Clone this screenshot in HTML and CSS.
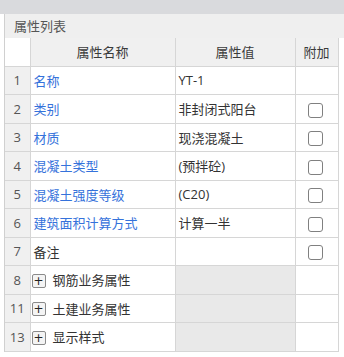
FILE: index.html
```html
<!DOCTYPE html>
<html lang="zh">
<head>
<meta charset="utf-8">
<title>属性列表</title>
<link rel="stylesheet" href="styles.css">
</head>
<body>
<div class="topbar"></div>
<div class="panel">
  <div class="title">属性列表</div>
  <table class="grid">
    <colgroup>
      <col class="c-num"><col class="c-name"><col class="c-val"><col class="c-add">
    </colgroup>
    <thead>
      <tr>
        <th class="num-head"></th>
        <th>属性名称</th>
        <th>属性值</th>
        <th>附加</th>
      </tr>
    </thead>
    <tbody>
      <tr><td class="num">1</td><td class="name link">名称</td><td class="val">YT-1</td><td class="add"></td></tr>
      <tr><td class="num">2</td><td class="name link">类别</td><td class="val">非封闭式阳台</td><td class="add"><span class="cb"></span></td></tr>
      <tr><td class="num">3</td><td class="name link">材质</td><td class="val">现浇混凝土</td><td class="add"><span class="cb"></span></td></tr>
      <tr><td class="num">4</td><td class="name link">混凝土类型</td><td class="val">(预拌砼)</td><td class="add"><span class="cb"></span></td></tr>
      <tr><td class="num">5</td><td class="name link">混凝土强度等级</td><td class="val">(C20)</td><td class="add"><span class="cb"></span></td></tr>
      <tr><td class="num">6</td><td class="name link">建筑面积计算方式</td><td class="val">计算一半</td><td class="add"><span class="cb"></span></td></tr>
      <tr><td class="num">7</td><td class="name">备注</td><td class="val"></td><td class="add"><span class="cb"></span></td></tr>
      <tr><td class="num">8</td><td class="name group"><span class="plus">+</span>钢筋业务属性</td><td class="val dis"></td><td class="add"></td></tr>
      <tr><td class="num">11</td><td class="name group"><span class="plus">+</span>土建业务属性</td><td class="val dis"></td><td class="add"></td></tr>
      <tr><td class="num">13</td><td class="name group"><span class="plus">+</span>显示样式</td><td class="val dis"></td><td class="add"></td></tr>
    </tbody>
  </table>
</div>
</body>
</html>
```

FILE: styles.css
```css
html, body {
  margin: 0;
  padding: 0;
  background: #ffffff;
}
body {
  font-family: "Open Sans", "Noto Sans CJK SC", sans-serif;
  font-size: 13px;
  color: #333333;
  width: 344px;
  height: 357px;
  overflow: hidden;
}
.topbar {
  height: 14px;
  background: #d9dadd;
}
.panel {
  margin-left: 4px;
  border-left: 1px solid #d0d0d0;
  background: #ffffff;
}
.title {
  height: 24px;
  line-height: 24px;
  padding-left: 9px;
  color: #555555;
  background: #efefef;
  font-family: "Noto Sans CJK SC", sans-serif;
}
.grid {
  border-collapse: collapse;
  table-layout: fixed;
  width: 333px;
  background: #ffffff;
}
.c-num { width: 25px; }
.c-name { width: 145px; }
.c-val { width: 120px; }
.c-add { width: 43px; }
.grid th, .grid td {
  border: 1px solid #d6d6d6;
  height: 27.5px;
  padding: 0;
  white-space: nowrap;
  overflow: hidden;
}
.grid tr > :first-child { border-left: none; }
.grid thead tr th { border-top: none; }
.grid th {
  background: #f0f0f0;
  font-weight: normal;
  color: #3a3a3a;
  text-align: center;
  font-family: "Noto Sans CJK SC", sans-serif;
}
.grid th.num-head {
  background: #ffffff;
}
.num {
  background: #f0f0f0;
  color: #555555;
  text-align: center;
  font-size: 13px;
}
.name {
  padding-left: 3px !important;
  font-family: "Noto Sans CJK SC", sans-serif;
  color: #333333;
}
.name.link {
  color: #3572db;
}
.name.group {
  padding-left: 1px !important;
}
.val {
  padding-left: 3px !important;
  font-family: "Open Sans", "Noto Sans CJK SC", sans-serif;
  color: #333333;
}
.val.dis {
  background: #e9e9e9;
}
.add {
  text-align: center;
}
.cb {
  display: inline-block;
  width: 13px;
  height: 13px;
  border: 1px solid #808080;
  border-radius: 3px;
  background: #ffffff;
  vertical-align: middle;
  margin-left: -2px;
}
.plus {
  display: inline-flex;
  align-items: center;
  justify-content: center;
  width: 12px;
  height: 12px;
  border: 1px solid #8a8a8a;
  border-radius: 2px;
  background: #f4f4f4;
  color: #222222;
  font-family: "DejaVu Sans", sans-serif;
  font-size: 12px;
  line-height: 1;
  margin-right: 7px;
  vertical-align: middle;
  position: relative;
  top: -1px;
}
```
